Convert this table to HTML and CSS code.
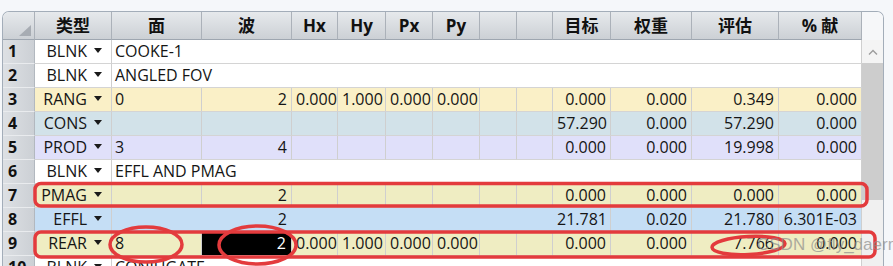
FILE: index.html
```html
<!DOCTYPE html>
<html lang="zh">
<head>
    <meta charset="UTF-8">
    <meta name="viewport" content="width=device-width, initial-scale=1.0">
    <title>Merit Function Editor</title>
    <link rel="stylesheet" href="styles.css">
</head>
<body>
    <div class="editor">
        <div class="sheet">
            <!-- Column headers -->
            <div class="row head">
                <div class="corner"><span class="tri"></span></div>
                <div>类型</div>
                <div>面</div>
                <div>波</div>
                <div>Hx</div>
                <div>Hy</div>
                <div>Px</div>
                <div>Py</div>
                <div></div>
                <div></div>
                <div>目标</div>
                <div>权重</div>
                <div>评估</div>
                <div>% 献</div>
            </div>

            <div class="row">
                <div class="rn">1</div>
                <div class="type"><span>BLNK</span><i class="drop"></i></div>
                <div class="note">COOKE-1</div>
            </div>

            <div class="row">
                <div class="rn">2</div>
                <div class="type"><span>BLNK</span><i class="drop"></i></div>
                <div class="note">ANGLED FOV</div>
            </div>

            <div class="row rang">
                <div class="rn">3</div>
                <div class="type"><span>RANG</span><i class="drop"></i></div>
                <div class="left">0</div>
                <div>2</div>
                <div>0.000</div>
                <div>1.000</div>
                <div>0.000</div>
                <div>0.000</div>
                <div></div>
                <div></div>
                <div>0.000</div>
                <div>0.000</div>
                <div>0.349</div>
                <div>0.000</div>
            </div>

            <div class="row cons">
                <div class="rn">4</div>
                <div class="type"><span>CONS</span><i class="drop"></i></div>
                <div></div>
                <div></div>
                <div></div>
                <div></div>
                <div></div>
                <div></div>
                <div></div>
                <div></div>
                <div>57.290</div>
                <div>0.000</div>
                <div>57.290</div>
                <div>0.000</div>
            </div>

            <div class="row prod">
                <div class="rn">5</div>
                <div class="type"><span>PROD</span><i class="drop"></i></div>
                <div class="left">3</div>
                <div>4</div>
                <div></div>
                <div></div>
                <div></div>
                <div></div>
                <div></div>
                <div></div>
                <div>0.000</div>
                <div>0.000</div>
                <div>19.998</div>
                <div>0.000</div>
            </div>

            <div class="row">
                <div class="rn">6</div>
                <div class="type"><span>BLNK</span><i class="drop"></i></div>
                <div class="note">EFFL AND PMAG</div>
            </div>

            <div class="row olive">
                <div class="rn">7</div>
                <div class="type"><span>PMAG</span><i class="drop"></i></div>
                <div></div>
                <div>2</div>
                <div></div>
                <div></div>
                <div></div>
                <div></div>
                <div></div>
                <div></div>
                <div>0.000</div>
                <div>0.000</div>
                <div>0.000</div>
                <div>0.000</div>
            </div>

            <div class="row effl">
                <div class="rn">8</div>
                <div class="type"><span>EFFL</span><i class="drop"></i></div>
                <div class="nb"></div>
                <div class="nb">2</div>
                <div class="nb"></div>
                <div class="nb"></div>
                <div class="nb"></div>
                <div class="nb"></div>
                <div class="nb"></div>
                <div class="nb"></div>
                <div>21.781</div>
                <div>0.020</div>
                <div>21.780</div>
                <div>6.301E-03</div>
            </div>

            <div class="row olive">
                <div class="rn">9</div>
                <div class="type"><span>REAR</span><i class="drop"></i></div>
                <div class="left">8</div>
                <div class="picked">2</div>
                <div>0.000</div>
                <div>1.000</div>
                <div>0.000</div>
                <div>0.000</div>
                <div></div>
                <div></div>
                <div>0.000</div>
                <div>0.000</div>
                <div>7.766</div>
                <div>0.000</div>
            </div>

            <div class="row">
                <div class="rn">10</div>
                <div class="type"><span>BLNK</span><i class="drop"></i></div>
                <div class="note">CONJUGATE</div>
            </div>
        </div>

        <!-- Vertical scrollbar -->
        <div class="scroll">
            <div class="sb-top"></div>
            <div class="sb-up">
                <svg width="10" height="6" viewBox="0 0 10 6"><polyline points="1,5.5 5,1.5 9,5.5" fill="none" stroke="#9c9c9c" stroke-width="1.4"/></svg>
            </div>
            <div class="sb-thumb"></div>
            <div class="sb-rest"></div>
        </div>
    </div>

    <!-- Red hand-drawn annotations -->
    <svg class="marks" width="893" height="266" viewBox="0 0 893 266">
        <rect x="35" y="183.5" width="832" height="22.5" rx="6" />
        <rect x="35" y="232" width="840" height="25" rx="6" />
        <ellipse cx="146" cy="244.5" rx="36" ry="17.5" />
        <ellipse cx="257.5" cy="245" rx="38.5" ry="19" />
        <ellipse cx="748.5" cy="245.5" rx="36.5" ry="9" transform="rotate(-3 748.5 245.5)" />
    </svg>

    <div class="wm">CSDN @fly_daerm</div>
</body>
</html>
```

FILE: styles.css
```css
html, body {
    margin: 0;
    padding: 0;
    height: 100%;
    overflow: hidden;
}

body {
    background-color: #f5f7fa;
    font-family: "Open Sans", "Noto Sans CJK SC", sans-serif;
    font-size: 16px;
    color: #151515;
    position: relative;
}

/* Editor frame */
.editor {
    margin: 11px 0 0 2px;
    width: 882px;
    box-sizing: border-box;
    border: 1px solid #a3adb9;
    border-bottom: none;
    border-radius: 7px 7px 0 0;
    overflow: hidden;
    display: flex;
    background-color: white;
}

.sheet {
    width: 859px;
    flex: none;
}

.row {
    display: grid;
    grid-template-columns: 32px 77px 90px 90px 46px 48px 47px 47px 37px 36px 58px 81px 87px 83px;
    height: 24px;
}

.row > div {
    box-sizing: border-box;
    border-right: 1px solid #cfcfcf;
    border-bottom: 1px solid #d4d4d4;
    line-height: 23px;
    padding: 0 4px;
    white-space: nowrap;
    overflow: hidden;
    text-align: right;
}

/* Header row */
.head {
    height: 28px;
}

.head > div {
    background: linear-gradient(#e6e9ec, #ccd0d5);
    border-right: 1px solid #abb1b9;
    border-bottom: 1px solid #9ea6b0;
    line-height: 27px;
    font-size: 17px;
    font-weight: bold;
    text-align: center;
    color: #111;
}

.head > .corner {
    display: flex;
    align-items: flex-end;
    justify-content: flex-end;
    padding: 0 3px 3px 0;
}

.tri {
    width: 0;
    height: 0;
    border-left: 12px solid transparent;
    border-bottom: 11px solid #a7acb3;
}

/* Row numbers */
.row > .rn {
    background: linear-gradient(to right, #dde0e4, #ccd0d5);
    border-right: 1px solid #b2b8bf;
    border-bottom: 1px solid #e9ebee;
    font-weight: bold;
    text-align: left;
    padding-left: 5px;
    color: #111;
}

/* Operand type with dropdown */
.row > .type {
    display: flex;
    justify-content: flex-end;
    align-items: center;
    gap: 7px;
    padding-right: 9px;
}

.drop {
    width: 0;
    height: 0;
    border-left: 4px solid transparent;
    border-right: 4px solid transparent;
    border-top: 5px solid #1a1a1a;
    margin-top: -2px;
}

.row > .note {
    grid-column: span 12;
    text-align: left;
    padding-left: 3px;
}

.row > .left {
    text-align: left;
    padding-left: 3px;
}

.row > .nb {
    border-right-color: transparent;
}

.row > .picked {
    background-color: black;
    color: white;
    padding-right: 5px;
}

/* Row colours by operand */
.rang > div:not(.rn) {
    background-color: #faf0c7;
}

.cons > div:not(.rn) {
    background-color: #d2e2e9;
}

.prod > div:not(.rn) {
    background-color: #e0e0fa;
}

.olive > div:not(.rn):not(.picked) {
    background-color: #efedc2;
}

.effl > div:not(.rn) {
    background-color: #c5def5;
}

/* Scrollbar */
.scroll {
    flex: 1;
    display: flex;
    flex-direction: column;
}

.sb-top {
    height: 28px;
    background-color: #f6f7f9;
}

.sb-up {
    height: 23px;
    display: flex;
    align-items: center;
    justify-content: center;
    background-color: #f4f4f4;
}

.sb-thumb {
    height: 137px;
    background-color: #cdcdcd;
}

.sb-rest {
    flex: 1;
    background-color: #f0f0f0;
}

/* Annotations */
.marks {
    position: absolute;
    top: 0;
    left: 0;
    pointer-events: none;
}

.marks rect,
.marks ellipse {
    fill: none;
    stroke: #e33b3d;
    stroke-width: 3.5;
}

.wm {
    position: absolute;
    left: 757px;
    top: 235px;
    font-family: "Liberation Sans", sans-serif;
    font-size: 17px;
    color: rgba(140, 140, 140, 0.7);
    pointer-events: none;
    white-space: nowrap;
}
```
